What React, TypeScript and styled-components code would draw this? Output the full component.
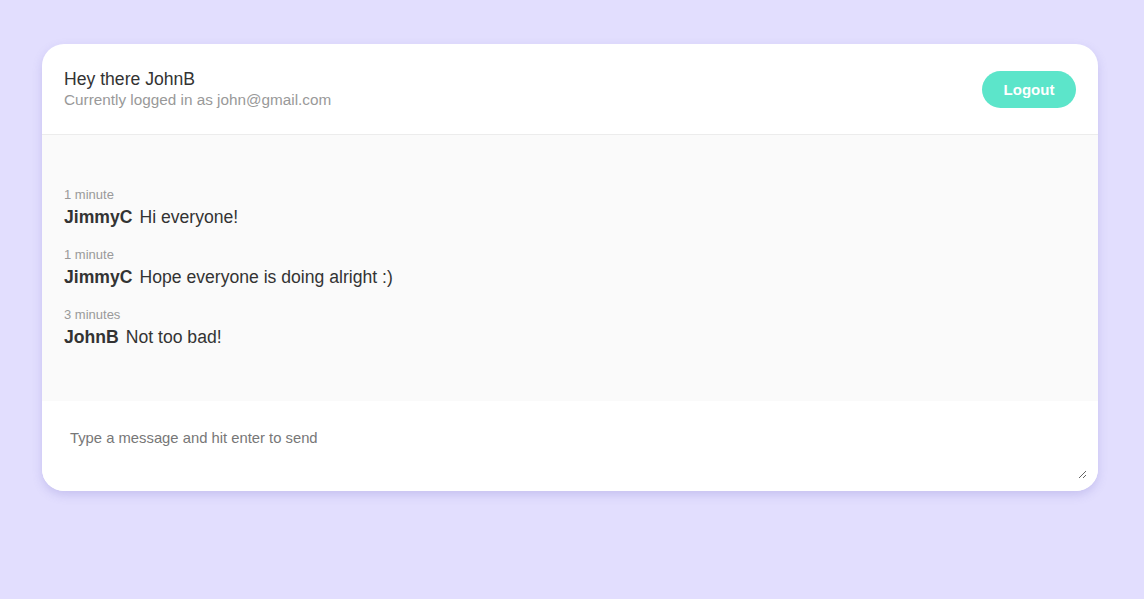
import styled, { createGlobalStyle } from 'styled-components'

type Message = {
  time: string
  user: string
  text: string
}

const messages: Message[] = [
  { time: '1 minute', user: 'JimmyC', text: 'Hi everyone!' },
  { time: '1 minute', user: 'JimmyC', text: 'Hope everyone is doing alright :)' },
  { time: '3 minutes', user: 'JohnB', text: 'Not too bad!' },
]

export default function App() {
  return (
    <>
      <GlobalStyle />
      <StyledPage>
        <StyledCard>
          <StyledHeader>
            <div>
              <StyledTitle>Hey there JohnB</StyledTitle>
              <StyledSubtitle>Currently logged in as john@gmail.com</StyledSubtitle>
            </div>
            <StyledLogout>Logout</StyledLogout>
          </StyledHeader>
          <StyledMessages>
            {messages.map((m, i) => (
              <StyledMessage key={i}>
                <StyledTime>{m.time}</StyledTime>
                <StyledLine>
                  <StyledUser>{m.user}</StyledUser>
                  {m.text}
                </StyledLine>
              </StyledMessage>
            ))}
          </StyledMessages>
          <StyledFooter>
            <StyledInput placeholder="Type a message and hit enter to send" />
          </StyledFooter>
        </StyledCard>
      </StyledPage>
    </>
  )
}

const GlobalStyle = createGlobalStyle`
  html, body {
    margin: 0;
    padding: 0;
    background: #e2defe;
    font-family: "Liberation Sans", Arial, sans-serif;
    color: #333;
  }
`

const StyledPage = styled.div`
  padding: 44px 46px 44px 42px;
`

const StyledCard = styled.div`
  background: #fff;
  border-radius: 22px;
  overflow: hidden;
  box-shadow: 0 4px 10px rgba(120, 110, 200, 0.25);
`

const StyledHeader = styled.header`
  height: 91px;
  box-sizing: border-box;
  padding: 0 22px;
  display: flex;
  align-items: center;
  justify-content: space-between;
  border-bottom: 1px solid #ececec;
`

const StyledTitle = styled.div`
  font-size: 17.6px;
  line-height: 22px;
  color: #333;
`

const StyledSubtitle = styled.div`
  font-size: 15.3px;
  line-height: 20px;
  color: #999;
`

const StyledLogout = styled.button`
  width: 94px;
  height: 37px;
  border: none;
  border-radius: 19px;
  background: #5ce5ca;
  color: #fff;
  font-family: inherit;
  font-size: 15px;
  font-weight: bold;
  cursor: pointer;
`

const StyledMessages = styled.div`
  background: #fafafa;
  height: 266px;
  box-sizing: border-box;
  padding: 52px 22px 0;
  display: flex;
  flex-direction: column;
  gap: 16px;
`

const StyledMessage = styled.div``

const StyledTime = styled.div`
  font-size: 13px;
  line-height: 16px;
  color: #999;
`

const StyledLine = styled.div`
  font-size: 17.6px;
  line-height: 28px;
  color: #333;
`

const StyledUser = styled.b`
  margin-right: 7px;
`

const StyledFooter = styled.div`
  padding: 11px 11px 12px 10px;
  background: #fff;
`

const StyledInput = styled.textarea`
  display: block;
  width: 100%;
  height: 67px;
  box-sizing: border-box;
  border: none;
  outline: none;
  padding: 18px;
  font-family: inherit;
  font-size: 14.8px;
  color: #333;
  &::placeholder {
    color: #777;
  }
`
